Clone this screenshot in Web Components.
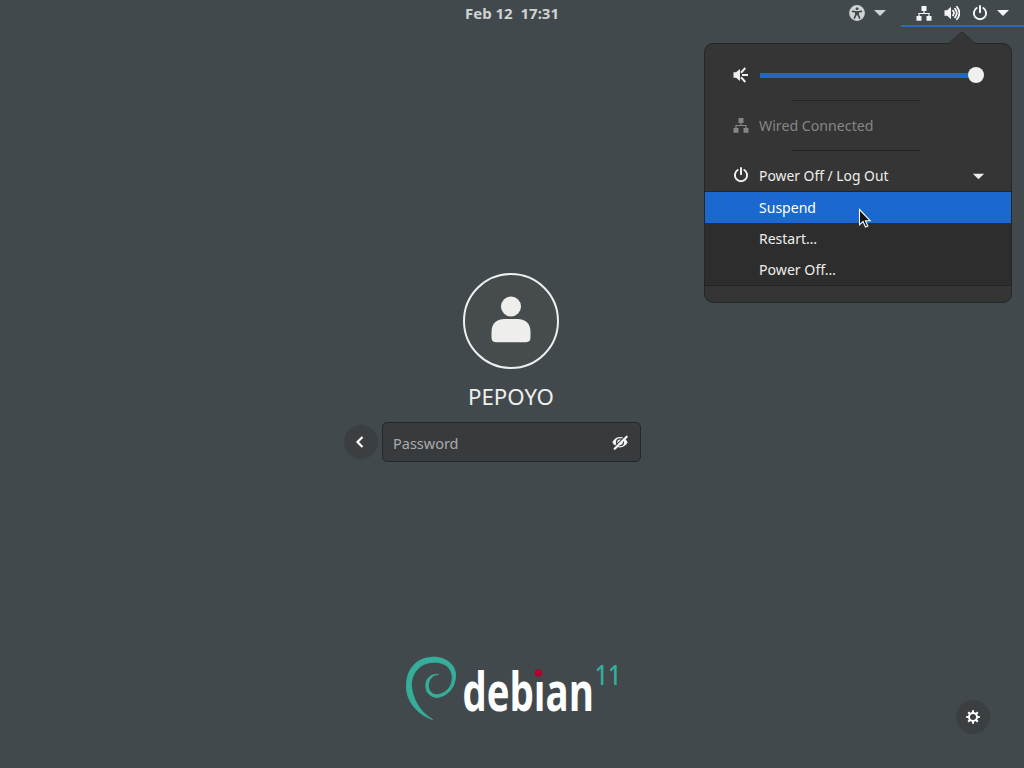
<!DOCTYPE html>
<html lang="en"><head><meta charset="utf-8"><title>Login</title>
<style>
html,body{margin:0;height:100%;overflow:hidden;background:#42494c}
body{font-family:"Noto Sans","Open Sans",sans-serif;color:#eeeeec}
</style></head><body><login-screen></login-screen>
<script>
const define=(name,html,setup)=>customElements.define(name,class extends HTMLElement{
  connectedCallback(){
    if(this.shadowRoot)return;
    const t=document.createElement('template');t.innerHTML=html;
    this.attachShadow({mode:'open'}).append(t.content.cloneNode(true));
    if(setup)setup(this,this.shadowRoot);
  }
});

const ICONS={
  access:'<circle cx="8" cy="8" r="7.9" fill="currentColor"/><g fill="none" stroke="var(--cut,#42494c)" stroke-linecap="round" stroke-linejoin="round"><circle cx="8" cy="3.8" r="1" fill="var(--cut,#42494c)"/><path d="M3.6 6.3 8 7l4.4-.7" stroke-width="1.7"/><path d="M8 7v2.5M6.9 7.3v2.4L5.4 13M9.1 7.3v2.4l1.5 3.3" stroke-width="1.700"/></g>',
  arrow:'<path d="M2 5h12l-6 6z" fill="currentColor"/>',
  wired:'<path d="M5.5 1h5v5h-5zM.5 11h5v4.7h-5zM10.500 11h5v4.700h-5z" fill="currentColor"/><path d="M8 6v2.500M3 11V8.500h10V11" fill="none" stroke="currentColor" stroke-width="1.200"/>',
  volume:'<path d="M.5 5.300h2.700L7 1.700v12.600L3.200 10.700H.5z" fill="currentColor"/><g fill="none" stroke="currentColor" stroke-width="1.800" stroke-linecap="round"><path d="M9 5.600q1.800 2.400 0 4.800M11 3.600q3.500 4.400 0 8.800M12.900 1.700q5 6.300 0 12.600"/></g>',
  power:'<path d="M4.700 3A6.100 6.100 0 1 0 11.300 3M8 1v6.300" fill="none" stroke="currentColor" stroke-width="2" stroke-linecap="round"/>',
  speaker:'<path d="M.5 5.300h2.500L7 2v12L3 10.700H.5z" fill="currentColor"/><path d="M8 5.700 12.300 1M9 8h6M8 10.300l4.300 4.700" fill="none" stroke="currentColor" stroke-width="2"/>',
  back:'<path d="M10.500 3 5.500 8l5 5" fill="none" stroke="currentColor" stroke-width="2.200"/>',
  eye:'<path d="M.3 8.300C2 4.700 5 3 8 3s6 1.700 7.700 5.300C14 11.500 11 13.500 8 13.500S2 11.500.3 8.300z" fill="currentColor"/><circle cx="8" cy="8.300" r="3.400" fill="none" stroke="var(--cut)" stroke-width="1.300"/><path d="M1.500 14 13 2.500" stroke="var(--cut)" stroke-width="1.500"/><path d="m2.700 14.700 12-12" stroke="currentColor" stroke-width="2.200" stroke-linecap="round"/>',
  user:'<circle cx="8" cy="3.500" r="3.350" fill="currentColor"/><path d="M1.500 13.500V12c0-3 2-4.300 4.300-4.300h4.400c2.300 0 4.300 1.300 4.300 4.300v1.500c0 1.200-.3 1.900-1.500 1.900H3c-1.200 0-1.500-.7-1.500-1.900z" fill="currentColor"/>',
  gear:'<circle cx="8" cy="8" r="4" fill="none" stroke="currentColor" stroke-width="2"/><g stroke="currentColor" stroke-width="2"><path d="M8 1.200v2.800M8 12v2.800M1.200 8h2.800M12 8h2.800M3.200 3.200l2 2M10.800 10.800l2 2M3.200 12.800l2-2M10.800 5.200l2-2"/></g>'
};
define('sym-icon','<style>:host{display:block;flex:none;width:var(--size,16px);height:var(--size,16px)}svg{display:block;width:100%;height:100%}</style><svg viewBox="0 0 16 16"></svg>',
  (el,root)=>root.querySelector('svg').innerHTML=ICONS[el.getAttribute('name')]);

define('fit-text','<style>:host{display:block;flex:none;height:20px}svg{display:block;overflow:visible}text{fill:currentColor;font-family:inherit;white-space:pre}</style><svg height="20"><text x="0" y="15" lengthAdjust="spacingAndGlyphs"></text></svg>',
  (el,root)=>{
    const w=el.getAttribute('width'),t=root.querySelector('text');
    root.querySelector('svg').setAttribute('width',w);
    t.setAttribute('textLength',w);t.setAttribute('font-size',el.getAttribute('size')||15);
    t.setAttribute('font-weight',el.getAttribute('weight')||400);t.textContent=el.getAttribute('label');
  });

define('top-bar',`<style>:host{display:grid;grid-template-columns:1fr auto 1fr;height:27px;color:#d0d3d3}
.clock{padding-top:4px}.right{display:flex;justify-content:flex-end}
.access{display:flex;gap:7px;padding:5px 13px 0 0}.sys{display:flex;width:123px;box-sizing:border-box;padding:5px 0 0 15px;border-bottom:2px solid #2c69ba;color:#f4f5f5;gap:12px}
.sys sym-icon:last-child{margin-left:-5px}</style>
<span></span><fit-text class="clock" label="Feb 12  17:31" width="94" size="14.3" weight="700"></fit-text>
<div class="right"><div class="access"><sym-icon name="access"></sym-icon><sym-icon name="arrow"></sym-icon></div>
<div class="sys"><sym-icon name="wired"></sym-icon><sym-icon name="volume"></sym-icon><sym-icon name="power"></sym-icon><sym-icon name="arrow"></sym-icon></div></div>`);

define('volume-slider','<style>:host{display:flex;align-items:center;width:224px;height:16px}.line{flex:1;height:5px;background:#1f69c1}.knob{width:16px;height:16px;border-radius:50%;background:#f0f0ef}</style><div class="line"></div><div class="knob"></div>');

define('menu-row','<style>:host{display:grid;grid-template-columns:16px 1fr auto;column-gap:10px;align-items:center;box-sizing:border-box;height:31px;padding:0 25px 0 28px}::slotted([slot=icon]){margin-top:-1px}</style><slot name="icon"><span></span></slot><slot></slot><slot name="end"></slot>');

define('system-menu',`<style>:host{display:block;box-sizing:border-box;width:308px;height:260px;border:1px solid #222728;border-radius:9px;background:#353535;padding-top:16px}
.arrow{position:absolute;left:243px;top:-12px;width:28px;height:13px;display:block}
.sep{height:1px;width:128px;margin:0 auto;background:#242424;position:relative;left:-2px}
.dim{color:#868685}.gap{height:9px}.sub{height:93px;background:#2d2d2d;border-top:1px solid #252525;border-bottom:1px solid #242424}
.active{background:#1b69ce;color:#fff}volume-slider{margin:-1px 0 0 1px}.end{--size:15px;margin-top:1px}</style>
<svg class="arrow" viewBox="0 0 28 13"><path d="M0 13 12.500 1q1.500-1.300 3 0L28 13z" fill="#353535"/><path d="M0 12 12.500 1q1.500-1.300 3 0L28 12" fill="none" stroke="#282d2e"/></svg>
<menu-row><sym-icon slot="icon" name="speaker"></sym-icon><volume-slider></volume-slider></menu-row>
<div class="gap"></div><div class="sep"></div><div class="gap"></div>
<menu-row class="dim"><sym-icon slot="icon" name="wired"></sym-icon><fit-text label="Wired Connected" width="114.5"></fit-text></menu-row>
<div class="gap"></div><div class="sep"></div><div class="gap"></div>
<menu-row><sym-icon slot="icon" name="power"></sym-icon><fit-text label="Power Off / Log Out" width="129.5"></fit-text><sym-icon class="end" slot="end" name="arrow"></sym-icon></menu-row>
<div class="sub"><menu-row class="active"><fit-text label="Suspend" width="57"></fit-text></menu-row><menu-row><fit-text label="Restart…" width="58"></fit-text></menu-row><menu-row><fit-text label="Power Off…" width="77"></fit-text></menu-row></div>`);

define('round-button','<style>:host{display:grid;place-items:center;width:34px;height:34px;border-radius:50%;background:#3b3f41;color:#fff}</style><slot></slot>');

define('login-form',`<style>:host{display:flex;flex-direction:column;align-items:center;width:1022px}
.avatar{display:grid;place-items:center;box-sizing:border-box;width:96px;height:96px;border:2px solid #eef0ef;border-radius:50%;background:#464c4d}
.avatar sym-icon{--size:48px;margin-top:-3px}.name{margin-top:21px}
.row{display:flex;align-items:center;gap:4px;margin:12px 38px 0 0}
.row round-button{box-sizing:border-box;padding-right:2px}
.field{display:flex;box-sizing:border-box;width:259px;height:40px;border:1px solid #23282a;border-radius:5px;background:#373b3d;align-items:center;justify-content:space-between;padding:0 12px 0 10px;color:#a9abab}
.field fit-text{padding-top:2px;box-sizing:border-box}
.field sym-icon{color:#f4f4f3;--cut:#373b3d}</style>
<div class="avatar"><sym-icon name="user"></sym-icon></div><fit-text class="name" label="PEPOYO" width="86" size="21"></fit-text>
<div class="row"><round-button><sym-icon name="back"></sym-icon></round-button><div class="field"><fit-text label="Password" width="65.500"></fit-text><sym-icon name="eye"></sym-icon></div></div>`);

define('debian-logo',`<style>:host{display:block;width:230px;height:90px}svg{display:block}</style>
<svg width="230" height="90" viewBox="402 644 230 90"><g fill="#35ae9b" stroke="#35ae9b" stroke-linejoin="round">
<path stroke-width=".8" d="M432.500 719.500C419 715 407 703 406.500 688C405.500 670 416 658.500 430 657.500C436 656 447 658.500 452 665C457 671 456 679 453.700 685C451 692 443 697.500 436 697.500C428 696 424.500 690 426.200 682C428 676.500 433 673.500 438.500 674.500C434 674.500 429.700 678 428.700 683C427.500 689 430.500 694 436 694.700C444 694.500 449.700 689 451.500 683C453.500 676 451.500 670.500 447 666C440 661 429 661 421 666C413 672 410 681 412 690C414.500 703 422 713 432.500 719.500Z"/>
<path stroke="none" d="m405.800 690 2.700-10-1-3 4-7 4-6 8-5.500-7 8-6 11z"/></g>
<text x="462.500" y="711" textLength="131.500" lengthAdjust="spacingAndGlyphs" font-family="Open Sans,Noto Sans,sans-serif" font-size="53.500" font-weight="700" fill="#fff">debian</text>
<path d="M532 664h13v14h-13z" fill="#42494c"/><circle cx="538.500" cy="673" r="3.800" fill="#b4002f"/>
<text x="594.700" y="684.500" textLength="26.500" lengthAdjust="spacingAndGlyphs" font-family="Noto Sans,Open Sans,sans-serif" font-size="27" font-weight="500" fill="#35ae9b">11</text></svg>`);

define('login-screen',`<style>:host{display:grid;grid-template-rows:27px 246px 189px 1fr;height:768px;width:1024px;background:#42494c;position:relative;overflow:hidden}
login-form{grid-row:3}.foot{grid-row:4;display:grid;grid-template-columns:402px 230px 1fr;padding-top:182px}
.foot round-button{justify-self:end;margin:56px 34px 0 0}
system-menu{position:absolute;left:704px;top:43px}.cursor{position:absolute;left:858px;top:208px}</style>
<top-bar></top-bar><login-form></login-form>
<div class="foot"><span></span><debian-logo></debian-logo><round-button><sym-icon name="gear"></sym-icon></round-button></div>
<system-menu></system-menu>
<svg class="cursor" width="14" height="21" viewBox="0 0 14 21"><path d="M1.500 1.500v15.300l3.500-3.300 2.500 5.500 2.300-1-2.400-5.300h4.700z" fill="#111" stroke="#fff" stroke-width="1.100"/></svg>`);
</script></body></html>
